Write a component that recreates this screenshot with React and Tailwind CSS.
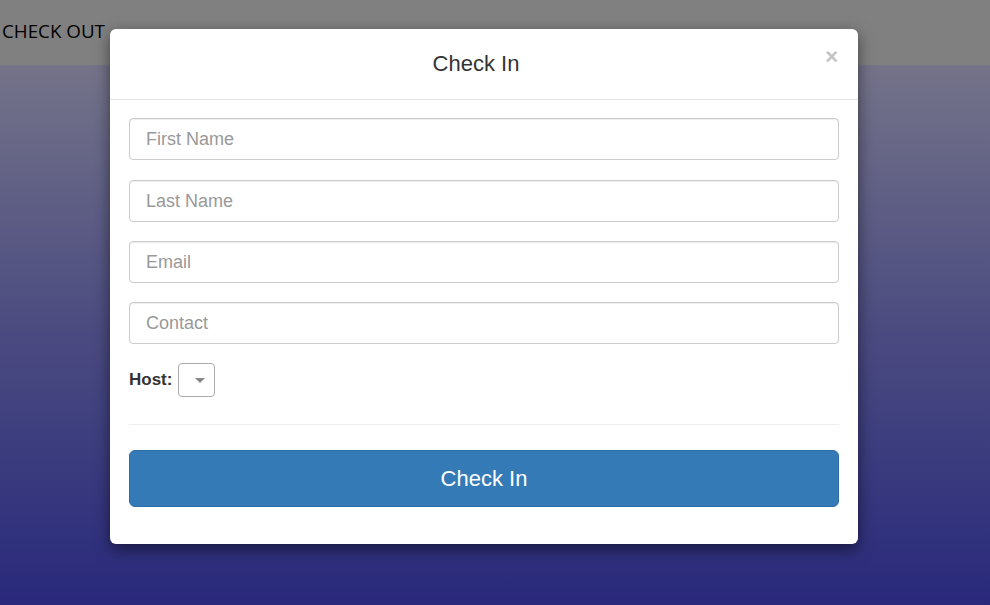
import { useState } from "react";

function Field({ placeholder, className = "" }) {
    return (
        <input
            type="text"
            placeholder={placeholder}
            className={"h-[42px] w-full rounded-[4px] border border-[#cccccc] bg-white px-4 text-[18px] text-[#555] outline-none placeholder:text-[#999999] shadow-[inset_0_1px_1px_rgba(0,0,0,0.075)] " + className}
        />
    );
}

export default function App() {
    const [host, setHost] = useState("");

    return (
        <div className="relative h-[605px] w-full overflow-hidden" style={{ fontFamily: "'Liberation Sans', Arial, sans-serif" }}>
            <div className="flex h-[65px] items-start bg-[#808080] pl-[2px] pt-[20px]">
                <span className="text-[18.8px] leading-[22px] text-black" style={{ fontFamily: "'Open Sans', sans-serif" }}>
                    CHECK OUT
                </span>
            </div>
            <div className="h-[540px] bg-gradient-to-b from-[#747389] via-[#4b4a80] to-[#29287b]" />

            <div className="absolute left-[110px] top-[29px] w-[748px] rounded-[6px] bg-white shadow-[0_5px_15px_rgba(0,0,0,0.5)]">
                <div className="relative flex h-[71px] items-center justify-center border-b border-[#e5e5e5] pb-[2px] pr-[16px]">
                    <h4 className="text-[22px] text-[#333333]">Check In</h4>
                    <button className="absolute right-[20px] top-[17px] text-[22px] font-bold leading-none text-[#c4c4c4]">
                        ×
                    </button>
                </div>

                <div className="flex flex-col px-[19px] pt-[18px]">
                    <div className="flex flex-col gap-[19px]">
                        <Field placeholder="First Name" className="mb-[1px]" />
                        <Field placeholder="Last Name" />
                        <Field placeholder="Email" />
                        <Field placeholder="Contact" />
                    </div>

                    <div className="mt-[19px] flex items-center gap-[6px]">
                        <label className="text-[17px] font-bold text-[#333]">Host:</label>
                        <button
                            onClick={() => setHost(host)}
                            className="flex h-[34px] w-[37px] items-center justify-end rounded-[4px] border border-[#aaaaaa] bg-white pr-[9px]"
                        >
                            <span className="h-0 w-0 border-x-[5px] border-t-[5px] border-x-transparent border-t-[#888888]" />
                        </button>
                    </div>

                    <div className="mt-[27px] border-t border-[#eeeeee]" />

                    <button className="mb-[37px] mt-[25px] h-[57px] w-full rounded-[6px] border border-[#2e6da4] bg-[#337ab7] text-[22px] text-white">
                        Check In
                    </button>
                </div>
            </div>
        </div>
    );
}
